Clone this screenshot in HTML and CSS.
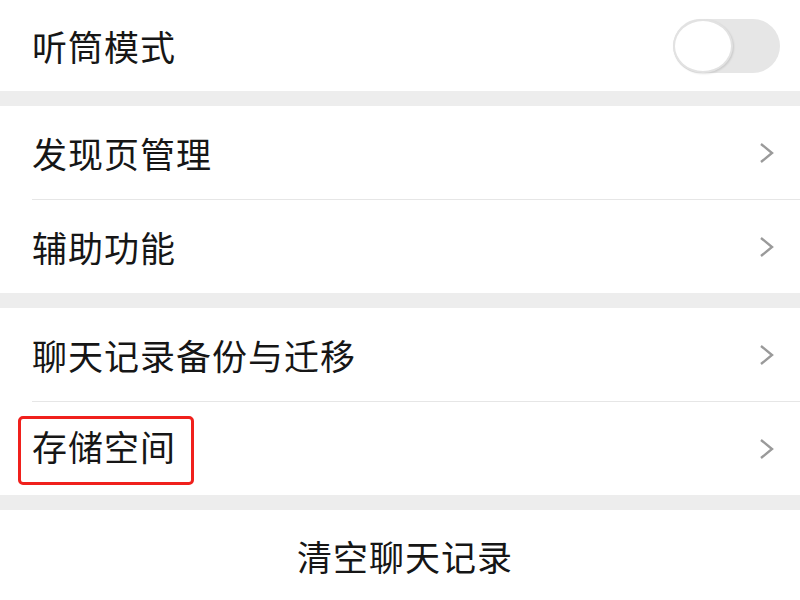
FILE: index.html
```html
<!doctype html>
<html lang="zh-CN">
	<head>
		<meta charset="UTF-8">
		<title>聊天设置</title>
		<link rel="stylesheet" href="styles.css">
	</head>
	<body>
		<div class="group">
			<div class="item first">
				<span class="label">听筒模式</span>
				<span class="switch"><i class="knob"></i></span>
			</div>
		</div>

		<div class="group">
			<div class="item line">
				<span class="label">发现页管理</span>
				<svg class="arrow" viewBox="0 0 16 22"><path d="M2 2 L13 11 L2 20"/></svg>
			</div>
			<div class="item">
				<span class="label">辅助功能</span>
				<svg class="arrow" viewBox="0 0 16 22"><path d="M2 2 L13 11 L2 20"/></svg>
			</div>
		</div>

		<div class="group">
			<div class="item line">
				<span class="label">聊天记录备份与迁移</span>
				<svg class="arrow" viewBox="0 0 16 22"><path d="M2 2 L13 11 L2 20"/></svg>
			</div>
			<div class="item">
				<span class="label mark">存储空间</span>
				<svg class="arrow" viewBox="0 0 16 22"><path d="M2 2 L13 11 L2 20"/></svg>
			</div>
		</div>

		<div class="group">
			<div class="item clear">清空聊天记录</div>
		</div>
	</body>
</html>
```

FILE: styles.css
```css
html,body{ margin:0; padding:0;}
body{ background:#ededed; font-family:"Noto Sans CJK SC","Noto Sans",sans-serif; color:#161616; width:800px; height:600px; overflow:hidden;}
.group{ background:#fff; margin-bottom:15px;}
.item{ display:flex; align-items:center; justify-content:space-between; height:93px; padding:0 25px 0 32px; font-size:35px; position:relative; box-sizing:border-box;}
.item.first{ height:91px; padding-right:20px;}
.item.line{ border-bottom:1px solid #e6e6e6; height:94px;}
.item.line::after{ content:""; position:absolute; left:0; bottom:-1px; width:32px; height:1px; background:#fff;}
.label{ letter-spacing:1px;}
.label.mark{ border:3px solid #f0201c; border-radius:5px; padding:1px 15px 11px 11px; margin-left:-14px; margin-top:4px;}
.arrow{ width:16px; height:22px; fill:none; stroke:#9a9a9a; stroke-width:2.4;}
.switch{ width:107px; height:54px; border-radius:27px; background:#e6e6e6; position:relative;}
.knob{ position:absolute; left:0; top:0; width:60px; height:54px; border-radius:50%; background:#fff; border:2px solid #e2e2e2; box-sizing:border-box; box-shadow:1px 1px 2px rgba(0,0,0,.12);}
.item.clear{ justify-content:center; height:90px; padding:0 0 0 10px; letter-spacing:1px;}
```
